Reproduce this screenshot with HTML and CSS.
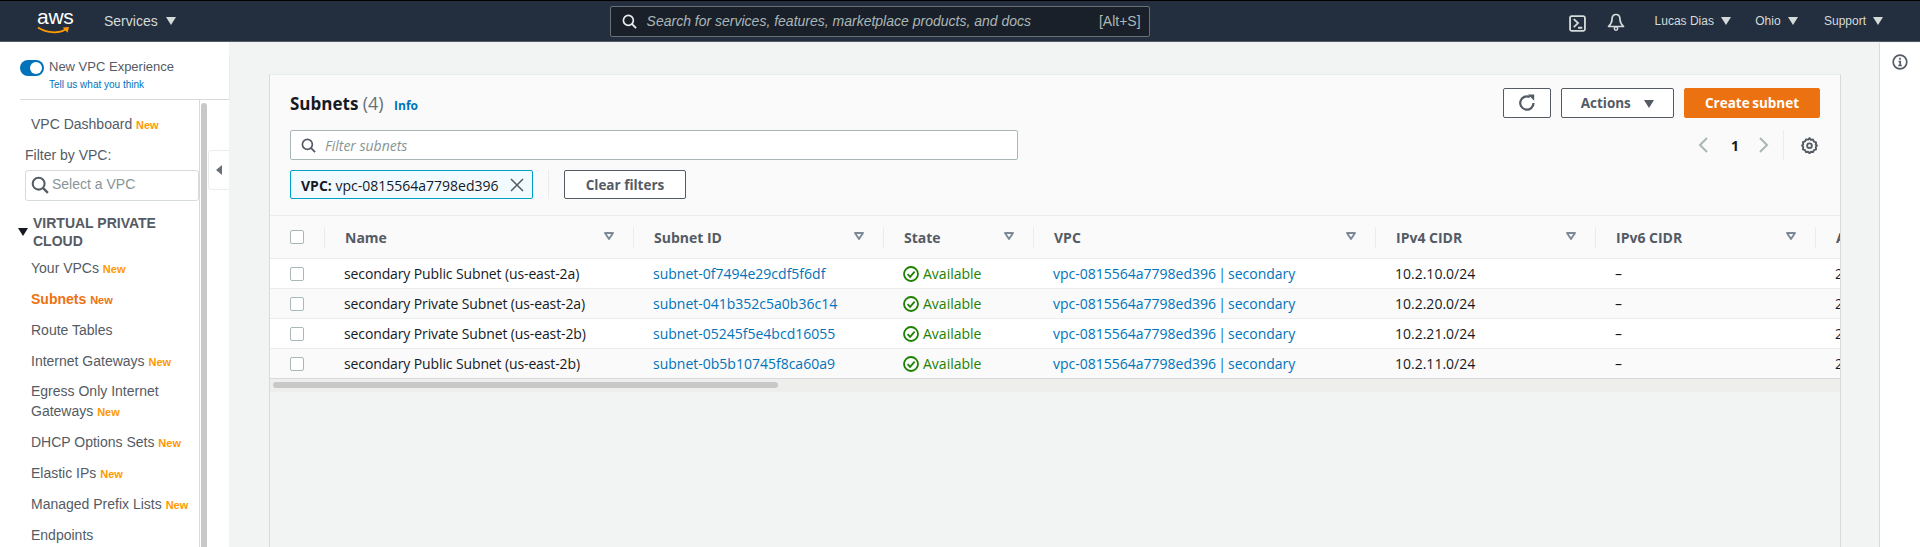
FILE: index.html
```html
<!DOCTYPE html>
<html lang="en">
    <head>
        <title>Subnets | VPC Console</title>
        <meta charset="UTF-8">
        <meta name="viewport" content="width=device-width, initial-scale=1.0">
        <link rel="stylesheet" href="styles.css">
    </head>
    <body>
        <svg class="sprites" aria-hidden="true">
            <symbol id="i-search" viewBox="0 0 16 16">
                <circle cx="6.8" cy="6.8" r="5.3" fill="none" stroke="currentColor" stroke-width="1.8"/>
                <path d="M10.8 10.8 15 15" fill="none" stroke="currentColor" stroke-width="2"/>
            </symbol>
            <symbol id="i-sort" viewBox="0 0 10 8">
                <path d="M1 1h8L5 7z" fill="none" stroke="currentColor" stroke-width="1.9" stroke-linejoin="round"/>
            </symbol>
            <symbol id="i-ok" viewBox="0 0 16 16">
                <circle cx="8" cy="8" r="7" fill="none" stroke="currentColor" stroke-width="1.8"/>
                <path d="M4.6 8.2 7.1 10.8 11.6 5.6" fill="none" stroke="currentColor" stroke-width="1.8"/>
            </symbol>
        </svg>

        <header class="topbar">
            <a class="logo" href="#">
                <span class="logo-text">aws</span>
                <svg class="logo-smile" viewBox="0 0 34 9" aria-hidden="true">
                    <path d="M1 1.5C9 7 22 8 29.5 3.5" fill="none" stroke="#f90" stroke-width="1.8"/>
                    <path d="M26.5 1.5 33 .8 31.5 6.8z" fill="#f90"/>
                </svg>
            </a>
            <span class="menu menu-services">Services <i class="caret"></i></span>
            <div class="search">
                <svg class="search-icon"><use href="#i-search"/></svg>
                <span class="search-text">Search for services, features, marketplace products, and docs</span>
                <span class="search-key">[Alt+S]</span>
            </div>
            <svg class="shell" viewBox="0 0 16 16" aria-hidden="true">
                <rect x="1" y="1" width="14" height="14" rx="1.5" fill="none" stroke="currentColor" stroke-width="1.7"/>
                <path d="M4.5 3.8 8.5 7.6 4.5 11.4M8.5 12h4" fill="none" stroke="currentColor" stroke-width="1.7"/>
            </svg>
            <svg class="bell" viewBox="0 0 18 18" aria-hidden="true">
                <path d="M9 1.500C6 1.500 5 4 5 6.500 5 9.500 3.500 11.500 1.500 13.500h15C14.500 11.500 13 9.500 13 6.500 13 4 12 1.500 9 1.500z" fill="none" stroke="currentColor" stroke-width="1.700" stroke-linejoin="round"/>
                <circle cx="9" cy="15.500" r="1.700" fill="none" stroke="currentColor" stroke-width="1.500"/>
            </svg>
            <span class="menu menu-user">Lucas Dias <i class="caret"></i></span>
            <span class="menu menu-region">Ohio <i class="caret"></i></span>
            <span class="menu menu-support">Support <i class="caret"></i></span>
        </header>

        <div class="layout">
            <aside class="sidebar">
                <div class="experience">
                    <span class="toggle"></span>
                    <div>
                        <div class="experience-title">New VPC Experience</div>
                        <a class="experience-link" href="#">Tell us what you think</a>
                    </div>
                </div>
                <div class="sidebar-body">
                    <nav class="nav">
                        <a class="nav-item" href="#">VPC Dashboard <b class="new">New</b></a>
                        <div class="nav-label">Filter by VPC:</div>
                        <div class="vpc-select">
                            <svg class="vpc-select-icon"><use href="#i-search"/></svg>
                            <span>Select a VPC</span>
                        </div>
                        <div class="nav-group"><i class="caret nav-caret"></i><span>VIRTUAL PRIVATE CLOUD</span></div>
                        <a class="nav-item" href="#">Your VPCs <b class="new">New</b></a>
                        <a class="nav-item active" href="#">Subnets <b class="new">New</b></a>
                        <a class="nav-item" href="#">Route Tables</a>
                        <a class="nav-item" href="#">Internet Gateways <b class="new">New</b></a>
                        <a class="nav-item" href="#">Egress Only Internet Gateways <b class="new">New</b></a>
                        <a class="nav-item" href="#">DHCP Options Sets <b class="new">New</b></a>
                        <a class="nav-item" href="#">Elastic IPs <b class="new">New</b></a>
                        <a class="nav-item" href="#">Managed Prefix Lists <b class="new">New</b></a>
                        <a class="nav-item" href="#">Endpoints</a>
                    </nav>
                    <div class="side-scroll"></div>
                    <div class="collapse"><i class="collapse-arrow"></i></div>
                </div>
            </aside>

            <main class="content">
                <section class="card">
                    <div class="card-head">
                        <div class="head-row">
                            <h1>Subnets <span class="count">(4)</span> <a class="info" href="#">Info</a></h1>
                            <div class="actions">
                                <button class="btn btn-icon">
                                    <svg class="refresh" viewBox="0 0 16 16" aria-hidden="true">
                                        <path d="M13.800 8A5.900 5.900 0 1 1 10.500 2.700" fill="none" stroke="currentColor" stroke-width="2"/>
                                        <path d="M8.800 .5h5.600v5.600z" fill="currentColor"/>
                                    </svg>
                                </button>
                                <button class="btn btn-actions">Actions <i class="caret"></i></button>
                                <button class="btn btn-primary">Create subnet</button>
                            </div>
                        </div>
                        <div class="head-row head-row-filter">
                            <div class="filter">
                                <svg class="filter-icon"><use href="#i-search"/></svg>
                                <span>Filter subnets</span>
                            </div>
                            <div class="pager">
                                <svg class="chevron" viewBox="0 0 10 16" aria-hidden="true"><path d="M9 1 2 8l7 7" fill="none" stroke="currentColor" stroke-width="2"/></svg>
                                <b class="page">1</b>
                                <svg class="chevron" viewBox="0 0 10 16" aria-hidden="true"><path d="M1 1l7 7-7 7" fill="none" stroke="currentColor" stroke-width="2"/></svg>
                                <span class="pager-sep"></span>
                                <svg class="gear" viewBox="0 0 16 16" aria-hidden="true">
                                    <path d="M8 1l1.200 1.700 2.100-.3.900 1.900 2 .7-.3 2.100L15 8l-1.100 1.500.3 2.100-2 .7-.9 1.900-2.100-.3L8 15.500l-1.200-1.600-2.100.3-.9-1.900-2-.7.3-2.100L1 8l1.100-1.100-.3-2.100 2-.7.9-1.900 2.100.3z" fill="none" stroke="currentColor" stroke-width="1.800" stroke-linejoin="round"/>
                                    <circle cx="8" cy="8.200" r="2.200" fill="none" stroke="currentColor" stroke-width="1.700"/>
                                </svg>
                            </div>
                        </div>
                        <div class="token-row">
                            <div class="token">
                                <span><b>VPC:</b> vpc-0815564a7798ed396</span>
                                <svg class="token-x" viewBox="0 0 14 14" aria-hidden="true"><path d="M1 1l12 12M13 1 1 13" fill="none" stroke="currentColor" stroke-width="1.500"/></svg>
                            </div>
                            <span class="token-sep"></span>
                            <button class="btn btn-clear">Clear filters</button>
                        </div>
                    </div>

                    <div class="table-wrap">
                        <table class="table">
                            <colgroup>
                                <col class="c-check"><col class="c-name"><col class="c-id"><col class="c-state"><col class="c-vpc"><col class="c-cidr"><col class="c-cidr"><col class="c-cidr">
                            </colgroup>
                            <thead>
                                <tr>
                                    <th><div class="th-in"><span class="check"></span></div></th>
                                    <th><div class="th-in">Name <svg class="sort"><use href="#i-sort"/></svg></div></th>
                                    <th><div class="th-in">Subnet ID <svg class="sort"><use href="#i-sort"/></svg></div></th>
                                    <th><div class="th-in">State <svg class="sort"><use href="#i-sort"/></svg></div></th>
                                    <th><div class="th-in">VPC <svg class="sort"><use href="#i-sort"/></svg></div></th>
                                    <th><div class="th-in">IPv4 CIDR <svg class="sort"><use href="#i-sort"/></svg></div></th>
                                    <th><div class="th-in">IPv6 CIDR <svg class="sort"><use href="#i-sort"/></svg></div></th>
                                    <th><div class="th-in">Available IPv4 addresses</div></th>
                                </tr>
                            </thead>
                            <tbody>
                                <tr>
                                    <td><span class="check"></span></td>
                                    <td class="cell-name">secondary Public Subnet (us-east-2a)</td>
                                    <td><a href="#">subnet-0f7494e29cdf5f6df</a></td>
                                    <td><span class="status"><svg class="status-icon"><use href="#i-ok"/></svg>Available</span></td>
                                    <td><a href="#">vpc-0815564a7798ed396 | secondary</a></td>
                                    <td>10.2.10.0/24</td>
                                    <td>–</td>
                                    <td>251</td>
                                </tr>
                                <tr>
                                    <td><span class="check"></span></td>
                                    <td class="cell-name">secondary Private Subnet (us-east-2a)</td>
                                    <td><a href="#">subnet-041b352c5a0b36c14</a></td>
                                    <td><span class="status"><svg class="status-icon"><use href="#i-ok"/></svg>Available</span></td>
                                    <td><a href="#">vpc-0815564a7798ed396 | secondary</a></td>
                                    <td>10.2.20.0/24</td>
                                    <td>–</td>
                                    <td>251</td>
                                </tr>
                                <tr>
                                    <td><span class="check"></span></td>
                                    <td class="cell-name">secondary Private Subnet (us-east-2b)</td>
                                    <td><a href="#">subnet-05245f5e4bcd16055</a></td>
                                    <td><span class="status"><svg class="status-icon"><use href="#i-ok"/></svg>Available</span></td>
                                    <td><a href="#">vpc-0815564a7798ed396 | secondary</a></td>
                                    <td>10.2.21.0/24</td>
                                    <td>–</td>
                                    <td>251</td>
                                </tr>
                                <tr>
                                    <td><span class="check"></span></td>
                                    <td class="cell-name">secondary Public Subnet (us-east-2b)</td>
                                    <td><a href="#">subnet-0b5b10745f8ca60a9</a></td>
                                    <td><span class="status"><svg class="status-icon"><use href="#i-ok"/></svg>Available</span></td>
                                    <td><a href="#">vpc-0815564a7798ed396 | secondary</a></td>
                                    <td>10.2.11.0/24</td>
                                    <td>–</td>
                                    <td>251</td>
                                </tr>
                            </tbody>
                        </table>
                    </div>
                    <div class="h-scroll"><div class="h-thumb"></div></div>
                </section>
            </main>

            <aside class="tools">
                <svg class="tools-info" viewBox="0 0 16 16" aria-hidden="true">
                    <circle cx="8" cy="8" r="6.800" fill="none" stroke="currentColor" stroke-width="1.700"/>
                    <path d="M8 3.700v2M6.500 7.500H8.200v4M6.300 11.500h3.500" fill="none" stroke="currentColor" stroke-width="1.700"/>
                </svg>
            </aside>
        </div>
    </body>
</html>
```

FILE: styles.css
```css
html, body {
    height: 100%;
}
body {
    margin: 0;
    overflow: hidden;
    display: flex;
    flex-direction: column;
    background-color: #f2f3f3;
    font-family: "Liberation Sans", Arial, sans-serif;
    font-size: 14px;
    color: #16191f;
}
a {
    color: #0073bb;
    text-decoration: none;
}
.sprites {
    display: none;
}

/* top bar */
.topbar {
    flex: none;
    display: flex;
    align-items: center;
    height: 40px;
    box-sizing: content-box;
    background-color: #232f3e;
    border-top: 1px solid #000;
    border-bottom: 1px solid #545b64;
    color: #d5dbdb;
}
.logo {
    display: block;
    width: 34px;
    height: 30px;
    margin-left: 37px;
}
.logo-text {
    display: block;
    color: #fff;
    font-size: 21px;
    line-height: 22px;
    letter-spacing: -0.3px;
    height: 20px;
}
.logo-smile {
    display: block;
    width: 33px;
    height: 9px;
}
.menu {
    display: flex;
    align-items: center;
    margin-bottom: 1px;
    white-space: pre;
}
.menu-services {
    margin-left: 33px;
}
.menu-user, .menu-region, .menu-support {
    font-size: 12px;
}
.menu-user {
    margin-left: 30px;
}
.menu-region {
    margin-left: 24px;
}
.menu-support {
    margin-left: 26px;
}
.caret {
    display: inline-block;
    width: 0;
    height: 0;
    margin-left: 4px;
    border-left: 5px solid transparent;
    border-right: 5px solid transparent;
    border-top: 8px solid currentColor;
}
.search {
    display: flex;
    align-items: center;
    box-sizing: border-box;
    width: 540px;
    height: 31px;
    margin-left: 434px;
    padding: 0 8px 0 11px;
    background-color: #1a2029;
    border: 1px solid #687078;
    border-radius: 2px;
}
.search-icon {
    width: 15px;
    height: 15px;
    color: #eaeded;
}
.search-text {
    flex: 1;
    margin-left: 10px;
    font-style: italic;
    color: #aab7b8;
}
.search-key {
    color: #aab7b8;
}
.shell {
    width: 17px;
    height: 17px;
    margin: 4px 0 0 419px;
}
.bell {
    width: 18px;
    height: 18px;
    margin: 2px 0 0 21px;
}

/* page layout */
.layout {
    flex: 1;
    min-height: 0;
    display: flex;
}
.sidebar {
    flex: none;
    width: 229px;
    display: flex;
    flex-direction: column;
    background-color: #fff;
}
.experience {
    flex: none;
    display: flex;
    box-sizing: border-box;
    height: 43px;
    margin: 15px -1px 0 20px;
    padding-top: 1px;
    border-right: 1px solid #eaeded;
    border-bottom: 1px solid #d5dbdb;
}
.toggle {
    position: relative;
    width: 24px;
    height: 16px;
    margin: 2px 5px 0 0;
    background-color: #0073bb;
    border-radius: 8px;
}
.toggle::after {
    content: "";
    position: absolute;
    right: 2px;
    top: 2px;
    width: 12px;
    height: 12px;
    background-color: #fff;
    border-radius: 50%;
}
.experience-title {
    font-size: 13px;
    line-height: 18px;
    color: #545b64;
}
.experience-link {
    display: block;
    font-size: 10px;
    line-height: 18px;
}
.sidebar-body {
    flex: 1;
    min-height: 0;
    display: flex;
}
.nav {
    box-sizing: border-box;
    width: 201px;
    padding: 14px 0 0 0;
    border-right: 1px solid #d5dbdb;
    color: #545b64;
    overflow: hidden;
}
.nav-item {
    display: block;
    margin: 0 10px 10.875px 31px;
    line-height: 20px;
    color: #545b64;
}
.nav-item.active {
    color: #ec7211;
    font-weight: bold;
}
.new {
    font-size: 11px;
    line-height: 1;
    color: #f90;
    font-weight: bold;
}
.active .new {
    color: #ec7211;
}
.nav-label {
    margin: 0 0 5px 25px;
    line-height: 20px;
}
.vpc-select {
    display: flex;
    align-items: center;
    box-sizing: border-box;
    width: 174px;
    height: 31px;
    margin: 0 0 13px 25px;
    padding: 0 0 3px 5px;
    border: 1px solid #d5dbdb;
    border-radius: 3px;
    color: #879596;
}
.vpc-select-icon {
    width: 18px;
    height: 18px;
    margin: 3px 3px 0 0;
    color: #545b64;
}
.nav-group {
    display: flex;
    align-items: center;
    margin: 0 10px 8px 18px;
    line-height: 18px;
    font-weight: bold;
}
.nav-caret {
    flex: none;
    margin: 0 5px 0 0;
    color: #16191f;
}
.side-scroll {
    flex: none;
    width: 6px;
    margin: 3px 0 0 1px;
    background-color: #c8c8c8;
    border-radius: 3px 3px 0 0;
}
.collapse {
    display: flex;
    align-items: center;
    justify-content: center;
    box-sizing: border-box;
    flex: none;
    width: 21px;
    height: 40px;
    margin: 50px 0 0 1px;
    border: 1px solid #eaeded;
    border-right: none;
    border-radius: 4px 0 0 4px;
}
.collapse-arrow {
    width: 0;
    height: 0;
    border-top: 5px solid transparent;
    border-bottom: 5px solid transparent;
    border-right: 6px solid #687078;
}

/* main card */
.content {
    flex: 1;
    min-width: 0;
    padding: 32px 38px 0 40px;
}
.card {
    height: 100%;
    box-sizing: border-box;
    background-color: #f2f3f3;
    border: 1px solid #d5dbdb;
    border-top-color: #eaeded;
    border-bottom: none;
    font-family: "Open Sans", "Noto Sans", sans-serif;
}
.card-head {
    padding: 13px 20px 16px;
    background-color: #fafafa;
    border-bottom: 1px solid #eaeded;
}
.head-row {
    display: flex;
    justify-content: space-between;
    height: 30px;
    margin-bottom: 12px;
}
.head-row-filter {
    margin-bottom: 10px;
}
h1 {
    margin: 0;
    font-size: 17px;
    line-height: 30px;
    font-weight: bold;
}
.count {
    font-size: 18px;
    font-weight: normal;
    color: #687078;
}
.info {
    margin-left: 6px;
    font-size: 12px;
}
.actions {
    display: flex;
    gap: 10px;
}
.btn {
    box-sizing: border-box;
    height: 30px;
    padding: 0;
    background-color: #fff;
    border: 1px solid #545b64;
    border-radius: 2px;
    font-family: inherit;
    font-size: 13.5px;
    font-weight: bold;
    color: #545b64;
}
.btn-icon {
    width: 48px;
}
.refresh {
    display: block;
    width: 18px;
    height: 18px;
    margin: 0 auto;
}
.btn-actions {
    width: 113px;
}
.btn-actions .caret {
    margin-left: 10px;
}
.btn-primary {
    width: 136px;
    background-color: #ec7211;
    border-color: #ec7211;
    color: #fff;
    word-spacing: -1px;
}
.filter {
    display: flex;
    align-items: center;
    box-sizing: border-box;
    width: 728px;
    height: 30px;
    padding-left: 10px;
    background-color: #fff;
    border: 1px solid #aab7b8;
    border-radius: 2px;
    font-style: italic;
    color: #879596;
}
.filter-icon {
    width: 15px;
    height: 15px;
    margin-right: 9px;
    color: #545b64;
}
.pager {
    display: flex;
    align-items: center;
    color: #aab7b8;
}
.chevron {
    width: 10px;
    height: 16px;
}
.page {
    margin: 0 20px 0 23px;
    color: #16191f;
}
.pager-sep {
    width: 1px;
    height: 30px;
    margin: 0 17px 0 14px;
    background-color: #eaeded;
}
.gear {
    width: 17px;
    height: 17px;
    margin-right: 2px;
    color: #545b64;
}
.token-row {
    display: flex;
    align-items: center;
    height: 29px;
}
.token {
    display: flex;
    align-items: center;
    box-sizing: border-box;
    width: 243px;
    height: 29px;
    padding: 1px 8px 0 10px;
    background-color: #f1faff;
    border: 1px solid #00a1c9;
    border-radius: 2px;
}
.token span {
    flex: 1;
    white-space: nowrap;
}
.token-x {
    width: 14px;
    height: 14px;
    color: #545b64;
}
.token-sep {
    width: 1px;
    height: 29px;
    margin: 0 15px;
    background-color: #eaeded;
}
.btn-clear {
    width: 122px;
    height: 29px;
    padding-top: 1px;
}

/* table */
.table-wrap {
    overflow: hidden;
}
.table {
    table-layout: fixed;
    width: 1766px;
    border-collapse: collapse;
    font-size: 14px;
}
.c-check {
    width: 55px;
}
.c-name {
    width: 309px;
}
.c-id {
    width: 250px;
}
.c-state {
    width: 150px;
}
.c-vpc {
    width: 342px;
}
.c-cidr {
    width: 220px;
}
th {
    height: 42px;
    padding: 0;
    background-color: #fafafa;
    border-bottom: 1px solid #eaeded;
    font-weight: bold;
    color: #545b64;
    text-align: left;
}
.th-in {
    display: flex;
    align-items: center;
    justify-content: space-between;
    height: 21px;
    padding: 0 20px;
    border-right: 1px solid #eaeded;
    white-space: nowrap;
}
th:first-child .th-in {
    padding-right: 0;
}
.sort {
    width: 10px;
    height: 8px;
    margin: 0 -1px 3px 0;
    color: #7d8998;
}
td {
    height: 29px;
    padding: 0 0 0 19px;
    background-color: #fff;
    border-bottom: 1px solid #eaeded;
    white-space: nowrap;
    word-spacing: -1.5px;
}
td.cell-name {
    word-spacing: 0;
    letter-spacing: -0.12px;
}
tbody tr:nth-child(even) td {
    background-color: #fafafa;
}
tbody tr:last-child td {
    border-bottom-color: #d5dbdb;
}
td:first-child {
    padding-left: 20px;
}
.check {
    display: block;
    box-sizing: border-box;
    width: 14px;
    height: 14px;
    background-color: #fff;
    border: 1px solid #aab7b8;
    border-radius: 2px;
}
.status {
    display: flex;
    align-items: center;
    color: #1d8102;
}
.status-icon {
    width: 16px;
    height: 16px;
    margin-right: 4px;
}
.h-scroll {
    height: 13px;
    padding: 3px 0 0 3px;
    box-sizing: border-box;
    background-color: #eeeeec;
}
.h-thumb {
    width: 505px;
    height: 6px;
    background-color: #c8c8c8;
    border-radius: 3px;
}

/* tools panel */
.tools {
    flex: none;
    box-sizing: border-box;
    width: 41px;
    padding: 11px 0 0 12px;
    background-color: #fff;
    border-left: 1px solid #d5dbdb;
    margin-top: 1px;
}
.tools-info {
    display: block;
    width: 16px;
    height: 16px;
    color: #545b64;
}
```
